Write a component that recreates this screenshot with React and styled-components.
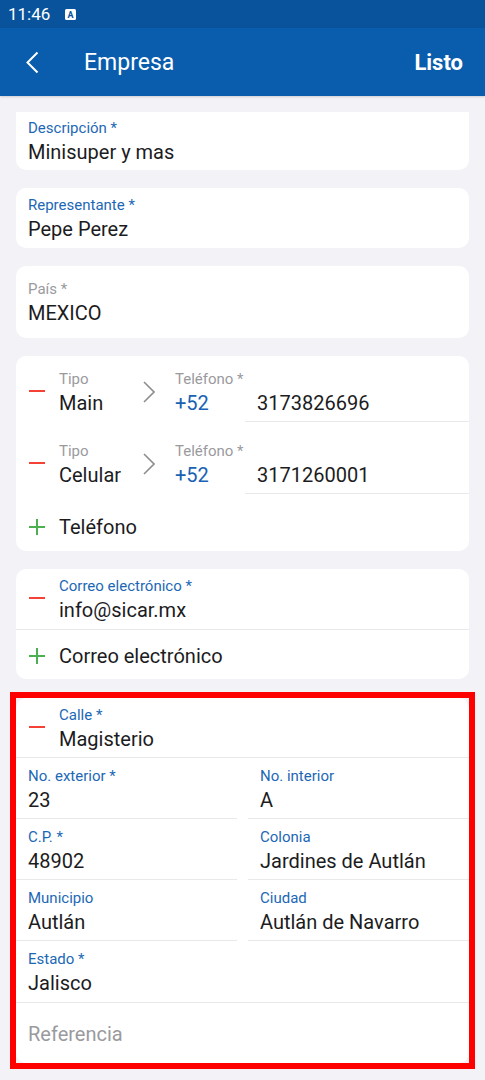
import styled, { createGlobalStyle } from "styled-components";

const Global = createGlobalStyle`
  body {
    margin: 0;
    background: #F2F2F7;
    font-family: Roboto, "Liberation Sans", sans-serif;
    -webkit-font-smoothing: antialiased;
  }
`;

function Minus() {
  return <MinusBar />;
}

function Plus() {
  return (
    <svg width="16" height="16" viewBox="0 0 16 16">
      <path d="M8 0v16M0 8h16" stroke="#4CAF50" strokeWidth="2" />
    </svg>
  );
}

function Chevron() {
  return (
    <svg width="12" height="22" viewBox="0 0 12 22">
      <path d="M1 1l10 10L1 21" fill="none" stroke="#8E8E93" strokeWidth="1.6" />
    </svg>
  );
}

function PhoneRow({ top, height, type, number }) {
  return (
    <PRow style={{ height }}>
      <IconSlot $pt={top}>
        <Minus />
      </IconSlot>
      <TypeCol $pt={top}>
        <Label $muted>Tipo</Label>
        <Value>{type}</Value>
      </TypeCol>
      <ChevCol $pt={top}>
        <Chevron />
      </ChevCol>
      <PrefixCol $pt={top}>
        <Label $muted>Teléfono *</Label>
        <Value $blue>+52</Value>
      </PrefixCol>
      <NumberCol $pt={top}>
        <Value>{number}</Value>
      </NumberCol>
    </PRow>
  );
}

export default function App() {
  return (
    <Screen>
      <Global />
      <StatusBar>
        <span>11:46</span>
        <svg width="11" height="11" viewBox="0 0 11 11">
          <rect x="0" y="0" width="11" height="11" rx="1.5" fill="#fff" />
          <text x="5.5" y="9" textAnchor="middle" fontSize="9" fontWeight="700" fill="#08539B" fontFamily="Roboto, sans-serif">A</text>
        </svg>
      </StatusBar>
      <AppBar>
        <BackBtn>
          <svg width="13" height="23" viewBox="0 0 13 23">
            <path d="M11.5 1.5L1.5 11.5l10 10" fill="none" stroke="#fff" strokeWidth="2" />
          </svg>
        </BackBtn>
        <Title>Empresa</Title>
        <Done>Listo</Done>
      </AppBar>

      <Content>
        <Card $flatTop>
          <Field $pt={8} $pb={6}>
            <Label>Descripción *</Label>
            <Value>Minisuper y mas</Value>
          </Field>
        </Card>

        <Card>
          <Field $pt={9} $pb={7}>
            <Label>Representante *</Label>
            <Value>Pepe Perez</Value>
          </Field>
        </Card>

        <Card>
          <Field $pt={15} $pb={13}>
            <Label $muted>País *</Label>
            <Value>MEXICO</Value>
          </Field>
        </Card>

        <Card>
          <PhoneRow top={15} height={66} type="Main" number="3173826696" />
          <PhoneRow top={21} height={72} type="Celular" number="3171260001" />
          <AddRow $pt={21} $pb={12}>
            <Plus />
            <span>Teléfono</span>
          </AddRow>
        </Card>

        <Card>
          <ListRow $line>
            <IconSlot $pt={9}>
              <Minus />
            </IconSlot>
            <Field $pt={9} $pb={7} $flush>
              <Label>Correo electrónico *</Label>
              <Value>info@sicar.mx</Value>
            </Field>
          </ListRow>
          <AddRow $pt={14} $pb={11}>
            <Plus />
            <span>Correo electrónico</span>
          </AddRow>
        </Card>

        <Highlight>
          <Card>
            <ListRow $line>
              <IconSlot $pt={9}>
                <Minus />
              </IconSlot>
              <Field $pt={9} $pb={6} $flush>
                <Label>Calle *</Label>
                <Value>Magisterio</Value>
              </Field>
            </ListRow>
            <Grid>
              <Field $pt={10} $pb={6} $line>
                <Label>No. exterior *</Label>
                <Value>23</Value>
              </Field>
              <Field $pt={10} $pb={6} $line>
                <Label>No. interior</Label>
                <Value>A</Value>
              </Field>
              <Field $pt={10} $pb={6} $line>
                <Label>C.P. *</Label>
                <Value>48902</Value>
              </Field>
              <Field $pt={10} $pb={6} $line>
                <Label>Colonia</Label>
                <Value>Jardines de Autlán</Value>
              </Field>
              <Field $pt={10} $pb={6} $line>
                <Label>Municipio</Label>
                <Value>Autlán</Value>
              </Field>
              <Field $pt={10} $pb={6} $line>
                <Label>Ciudad</Label>
                <Value>Autlán de Navarro</Value>
              </Field>
            </Grid>
            <Field $pt={10} $pb={7} $line>
              <Label>Estado *</Label>
              <Value>Jalisco</Value>
            </Field>
            <Field $pt={19} $pb={17}>
              <Value $placeholder>Referencia</Value>
            </Field>
          </Card>
        </Highlight>
      </Content>
    </Screen>
  );
}

const Screen = styled.div`
  width: 485px;
  height: 1080px;
  overflow: hidden;
  background: #F2F2F7;
`;

const StatusBar = styled.div`
  height: 28px;
  background: #08539B;
  color: #fff;
  display: flex;
  align-items: center;
  gap: 15px;
  padding: 0 8px;
  font-size: 17px;
`;

const AppBar = styled.div`
  height: 68px;
  background: #0A5DAC;
  color: #fff;
  display: flex;
  align-items: center;
  padding: 0 22px 0 26px;
  box-shadow: 0 1px 2px rgba(0, 0, 0, 0.15);
`;

const BackBtn = styled.div`
  width: 58px;
  display: flex;
  align-items: center;
`;

const Title = styled.div`
  flex: 1;
  font-size: 23px;
`;

const Done = styled.div`
  font-size: 22px;
  font-weight: 700;
`;

const Content = styled.div`
  display: flex;
  flex-direction: column;
  gap: 18px;
  padding: 16px 16px 0;
`;

const Card = styled.div`
  background: #fff;
  border-radius: ${p => (p.$flatTop ? "0 0 10px 10px" : "10px")};
`;

const Highlight = styled.div`
  border: 6px solid #FF0000;
  margin: -5px -6px 0;
`;

const Field = styled.div`
  padding: ${p => p.$pt}px ${p => (p.$flush ? 0 : 12)}px ${p => p.$pb}px;
  border-bottom: ${p => (p.$line ? "1px solid #E9E9EC" : "none")};
  flex: 1;
  min-width: 0;
`;

const Label = styled.div`
  font-size: 15px;
  line-height: 17px;
  margin-bottom: 3px;
  color: ${p => (p.$muted ? "#9A9A9E" : "#1C68B5")};
  white-space: nowrap;
`;

const Value = styled.div`
  font-size: 20px;
  line-height: 24px;
  color: ${p => (p.$placeholder ? "#9A9A9E" : p.$blue ? "#1862B3" : "#1C1C1E")};
  white-space: nowrap;
`;

const MinusBar = styled.div`
  width: 16px;
  height: 2px;
  background: #F44336;
`;

const IconSlot = styled.div`
  width: 43px;
  flex: none;
  box-sizing: border-box;
  padding: ${p => p.$pt + 19}px 0 0 13px;
`;

const PRow = styled.div`
  display: flex;
`;

const TypeCol = styled.div`
  width: 84px;
  flex: none;
  padding-top: ${p => p.$pt}px;
`;

const ChevCol = styled.div`
  width: 32px;
  flex: none;
  padding-top: ${p => p.$pt + 10}px;
`;

const PrefixCol = styled.div`
  width: 70px;
  flex: none;
  padding-top: ${p => p.$pt}px;
`;

const NumberCol = styled.div`
  flex: 1;
  padding: ${p => p.$pt + 20}px 12px 0;
  border-bottom: 1px solid #E9E9EC;
`;

const ListRow = styled.div`
  display: flex;
  border-bottom: ${p => (p.$line ? "1px solid #E9E9EC" : "none")};
`;

const AddRow = styled.div`
  display: flex;
  align-items: center;
  gap: 14px;
  padding: ${p => p.$pt}px 12px ${p => p.$pb}px 13px;
  font-size: 20px;
  line-height: 24px;
  color: #1C1C1E;
`;

const Grid = styled.div`
  display: grid;
  grid-template-columns: 1fr 1fr;
  column-gap: 11px;
`;
